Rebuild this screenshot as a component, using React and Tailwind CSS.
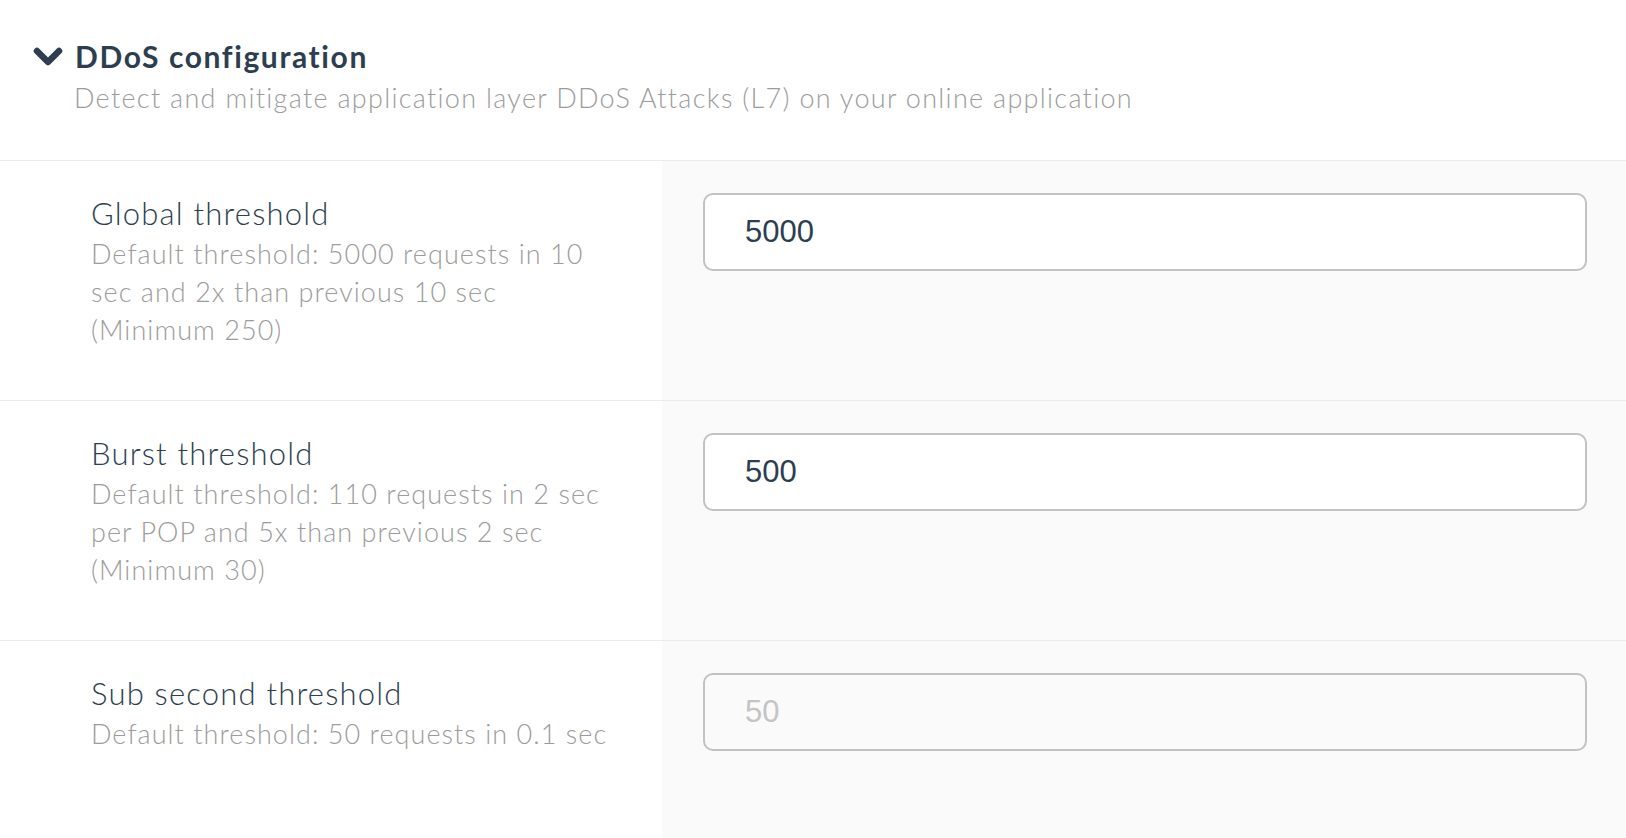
import React from "react";

function Row({ label, lines, value, disabled }) {
  return (
    <div className="grid grid-cols-[662px_1fr] h-[240px] border-b border-[#ebebeb]">
      <div className="bg-white pl-[91px] pt-[34px]">
        <div className="text-[31px] leading-[36px] tracking-[1.2px] font-light text-[#2c3e50]">{label}</div>
        <div className="mt-[4px] text-[27px] leading-[38px] tracking-[1.05px] font-light text-[#9c9c9c]">
          {lines.map((l, i) => (
            <div key={i}>{l}</div>
          ))}
        </div>
      </div>
      <div className="bg-[#fafafa] pl-[41px] pr-[39px] pt-[32px]">
        <div
          className={`h-[78px] rounded-[10px] border-2 border-[#c2c2c2] flex items-center pl-[40px] font-['Liberation_Sans',Arial,sans-serif] text-[31px] ${
            disabled ? "bg-[#fafafa] text-[#c4c4c4]" : "bg-white text-[#2c3e50]"
          }`}
        >
          {value}
        </div>
      </div>
    </div>
  );
}

export default function App() {
  return (
    <div className="w-[1626px] h-[838px] bg-white overflow-hidden font-['Lato',sans-serif]">
      <div className="h-[161px] border-b border-[#ebebeb] pt-[36px]">
        <div className="flex items-center pl-[33px]">
          <svg width="30" height="20" viewBox="0 0 30 20" className="shrink-0 mt-[2px]">
            <polyline
              points="4,4 15,15 26,4"
              fill="none"
              stroke="#2c3e50"
              strokeWidth="6.5"
              strokeLinecap="round"
              strokeLinejoin="round"
            />
          </svg>
          <div className="ml-[12px] text-[30px] leading-[40px] font-bold tracking-[1.6px] text-[#2c3e50]">
            DDoS configuration
          </div>
        </div>
        <div className="pl-[74px] mt-[4px] text-[27px] leading-[36px] tracking-[1.3px] font-light text-[#9c9c9c]">
          Detect and mitigate application layer DDoS Attacks (L7) on your online application
        </div>
      </div>
      <Row
        label="Global threshold"
        lines={[
          "Default threshold: 5000 requests in 10",
          "sec and 2x than previous 10 sec",
          "(Minimum 250)",
        ]}
        value="5000"
      />
      <Row
        label="Burst threshold"
        lines={[
          "Default threshold: 110 requests in 2 sec",
          "per POP and 5x than previous 2 sec",
          "(Minimum 30)",
        ]}
        value="500"
      />
      <Row
        label="Sub second threshold"
        lines={["Default threshold: 50 requests in 0.1 sec"]}
        value="50"
        disabled
      />
    </div>
  );
}
